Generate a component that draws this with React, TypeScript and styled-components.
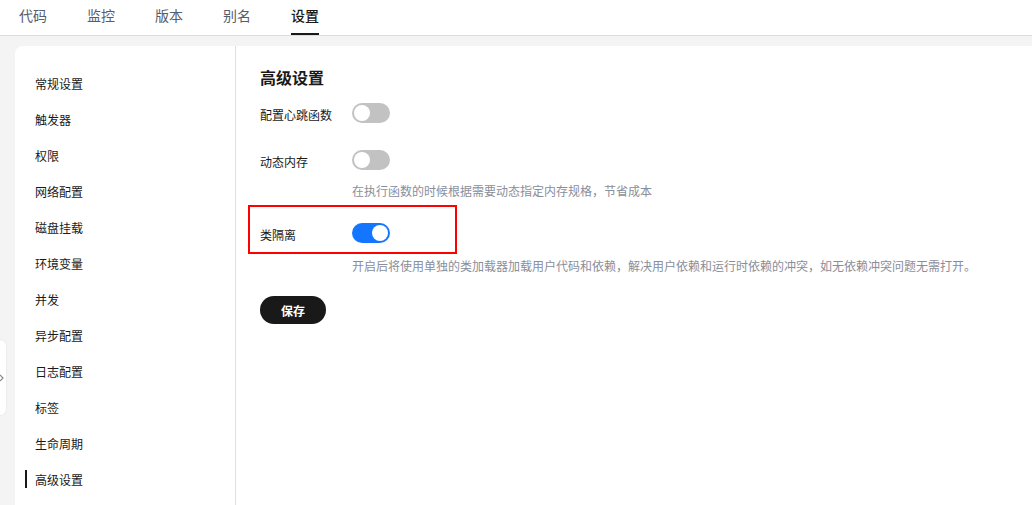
import React, { useState } from "react";
import styled, { createGlobalStyle } from "styled-components";

const Global = createGlobalStyle`
  html, body { margin: 0; padding: 0; background: #f4f4f4; }
  body { font-family: "Noto Sans CJK SC", "Noto Sans", sans-serif; color: #191919; }
  #root { min-height: 505px; }
  * { box-sizing: border-box; }
`;

const Page = styled.div`
  width: 1032px;
  height: 505px;
  display: flex;
  flex-direction: column;
  overflow: hidden;
  position: relative;
  background: #f4f4f4;
`;

const TabBar = styled.div`
  height: 36px;
  flex: none;
  background: #fff;
  border-bottom: 1px solid #dcdcdc;
  display: flex;
  gap: 40px;
  padding-left: 19px;
`;

const Tab = styled.div<{ $active?: boolean }>`
  height: 35px;
  font-size: 14px;
  line-height: 14px;
  padding-top: 8px;
  color: ${(p) => (p.$active ? "#191919" : "#575d6c")};
  font-weight: ${(p) => (p.$active ? 500 : 400)};
  border-bottom: 2px solid ${(p) => (p.$active ? "#191919" : "transparent")};
`;

const Body = styled.div`
  flex: 1;
  padding: 10px 0 0 15px;
  display: flex;
  min-height: 0;
`;

const Card = styled.div`
  flex: 1;
  background: #fff;
  border-radius: 8px 0 0 0;
  display: flex;
  margin-right: -10px;
`;

const SideNav = styled.nav`
  width: 221px;
  flex: none;
  border-right: 1px solid #dfdfdf;
  padding-top: 19px;
  display: flex;
  flex-direction: column;
`;

const NavItem = styled.div<{ $active?: boolean }>`
  height: 36px;
  display: flex;
  align-items: center;
  padding-left: 20px;
  font-size: 12px;
  color: #191919;
  position: relative;
  &::before {
    content: "";
    display: ${(p) => (p.$active ? "block" : "none")};
    position: absolute;
    left: 10px;
    top: 9px;
    width: 2px;
    height: 18px;
    background: #191919;
  }
`;

const Content = styled.div`
  flex: 1;
  padding: 19px 0 0 24px;
  display: flex;
  flex-direction: column;
  align-items: flex-start;
`;

const Heading = styled.h2`
  margin: 0 0 10px;
  font-size: 16px;
  line-height: 24px;
  font-weight: 700;
  color: #191919;
`;

const FormItem = styled.div<{ $last?: boolean }>`
  margin-bottom: ${(p) => (p.$last ? "0" : "19px")};
  position: relative;
`;

const FormRow = styled.div`
  display: flex;
  align-items: center;
  height: 28px;
`;

const Label = styled.div`
  width: 92px;
  font-size: 12px;
  color: #191919;
  line-height: 18px;
  padding-top: 3px;
`;

const Desc = styled.div<{ $gap?: number }>`
  margin: ${(p) => p.$gap ?? 8}px 0 0 92px;
  font-size: 12px;
  line-height: 18px;
  color: #8a8e99;
  white-space: nowrap;
`;

const SwitchTrack = styled.button<{ $on?: boolean }>`
  width: 38px;
  height: 20px;
  border-radius: 10px;
  border: none;
  padding: 0;
  cursor: pointer;
  position: relative;
  background: ${(p) => (p.$on ? "#1476ff" : "#c2c2c2")};
  &::after {
    content: "";
    position: absolute;
    top: 2px;
    left: ${(p) => (p.$on ? "20px" : "2px")};
    width: 16px;
    height: 16px;
    border-radius: 50%;
    background: #fff;
  }
`;

const Highlight = styled.div`
  position: absolute;
  left: -12px;
  top: -14px;
  width: 209px;
  height: 49px;
  border: 2px solid #ff0000;
  pointer-events: none;
`;

const SaveButton = styled.button`
  margin-top: 21px;
  width: 66px;
  height: 28px;
  border-radius: 14px;
  border: none;
  background: #191919;
  color: #fff;
  font-family: inherit;
  font-size: 12px;
  font-weight: 700;
  cursor: pointer;
`;

const Handle = styled.div`
  position: absolute;
  left: 0;
  top: 339px;
  width: 7px;
  height: 77px;
  background: #fff;
  border-radius: 0 7px 7px 0;
  border: 1px solid #ececec;
  border-left: none;
  display: flex;
  align-items: center;
  overflow: hidden;
`;

const tabs = ["代码", "监控", "版本", "别名", "设置"];
const navs = [
  "常规设置",
  "触发器",
  "权限",
  "网络配置",
  "磁盘挂载",
  "环境变量",
  "并发",
  "异步配置",
  "日志配置",
  "标签",
  "生命周期",
  "高级设置",
];

export default function App() {
  const [sw, setSw] = useState([false, false, true]);
  const toggle = (i: number) => setSw((s) => s.map((v, j) => (j === i ? !v : v)));
  return (
    <Page>
      <Global />
      <TabBar>
        {tabs.map((t) => (
          <Tab key={t} $active={t === "设置"}>
            {t}
          </Tab>
        ))}
      </TabBar>
      <Body>
        <Card>
          <SideNav>
            {navs.map((n) => (
              <NavItem key={n} $active={n === "高级设置"}>
                {n}
              </NavItem>
            ))}
          </SideNav>
          <Content>
            <Heading>高级设置</Heading>
            <FormItem>
              <FormRow>
                <Label>配置心跳函数</Label>
                <SwitchTrack $on={sw[0]} onClick={() => toggle(0)} />
              </FormRow>
            </FormItem>
            <FormItem>
              <FormRow>
                <Label>动态内存</Label>
                <SwitchTrack $on={sw[1]} onClick={() => toggle(1)} />
              </FormRow>
              <Desc>在执行函数的时候根据需要动态指定内存规格，节省成本</Desc>
            </FormItem>
            <FormItem $last>
              <Highlight />
              <FormRow>
                <Label>类隔离</Label>
                <SwitchTrack $on={sw[2]} onClick={() => toggle(2)} />
              </FormRow>
              <Desc $gap={10}>
                开启后将使用单独的类加载器加载用户代码和依赖，解决用户依赖和运行时依赖的冲突，如无依赖冲突问题无需打开。
              </Desc>
            </FormItem>
            <SaveButton>保存</SaveButton>
          </Content>
        </Card>
      </Body>
      <Handle>
        <svg width="6" height="8" viewBox="0 0 6 8" style={{ marginLeft: -1 }}>
          <polyline points="1,1 4,4 1,7" fill="none" stroke="#8a8a8a" strokeWidth="1.2" />
        </svg>
      </Handle>
    </Page>
  );
}
